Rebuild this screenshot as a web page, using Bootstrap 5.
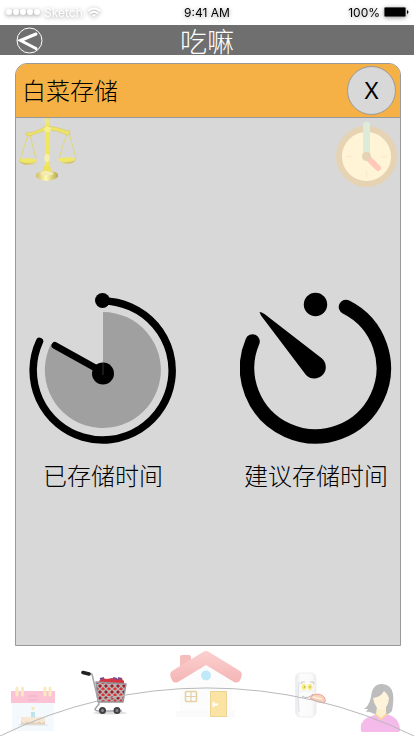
<!DOCTYPE html>
<html lang="zh-CN">
<head>
<meta charset="utf-8">
<meta name="viewport" content="width=device-width, initial-scale=1">
<title>吃嘛</title>
<link href="https://cdn.jsdelivr.net/npm/bootstrap@5.3.0/dist/css/bootstrap.min.css" rel="stylesheet">
<script src="https://cdn.jsdelivr.net/npm/bootstrap@5.3.0/dist/js/bootstrap.bundle.min.js" defer></script>
<style>
body { font-family: "Liberation Sans", "Noto Sans CJK SC", sans-serif; color: #000; background: #fff; }
svg { display: block; }
.status-bar { height: 25px; padding: 0 5px; font: 12px/24px Inter, sans-serif; }
.status-bar > div { flex: 1 1 0; }
.status-shadow { filter: drop-shadow(0 1px 2px rgba(0,0,0,.4)); }
.carrier { color: #fff; }
.title-bar { height: 30px; background: #6f6f6f; }
.app-title { padding-top: 2px; font: 300 27px/30px "Noto Sans CJK SC", sans-serif; color: #fff; }
.back-link { width: 28px; }
.side-slot { flex: 1 1 0; padding-left: 15px; }
.panel { margin: 8px 13px 0 15px; border: 1px solid #999; border-radius: 12px 12px 0 0; background: #d8d8d8; }
.panel-head { height: 54px; padding: 0 4px 0 6px; background: #f5b145; border-bottom: 1px solid #999; border-radius: 11px 11px 0 0; }
.hand-text { font: 300 24px/32px "Noto Sans CJK SC", sans-serif; }
.panel-title { padding-bottom: 2px; }
.close-btn { width: 49px; height: 49px; padding: 0 0 2px; border: 1px solid #999; background: #d8d8d8; font: 24px/40px "Noto Sans", sans-serif; color: #000; }
.tool-row { padding: 0 2px 0 3px; }
.timer-row { padding: 104px 8px 0 11px; }
.timer { width: 152px; }
.timer-label { margin-top: 15px; }
.tab-area { height: 90px; padding: 4px 12px 0 10px; }
.tab-arc { inset: 0; }
.tab-arc path { vector-effect: non-scaling-stroke; }
.faded { opacity: .3; }
</style>
</head>
<body>
<div class="d-flex flex-column min-vh-100">
  <header>
    <div class="status-bar d-flex align-items-center">
      <div class="status-shadow carrier d-flex align-items-center gap-1">
        <svg width="35" height="10" viewBox="0 0 35 10" fill="#fff" aria-hidden="true"><circle cx="4" cy="4" r="3"/><circle cx="11" cy="4" r="3"/><circle cx="18" cy="4" r="3"/><circle cx="25" cy="4" r="3"/><circle cx="32" cy="4" r="3"/></svg>
        <span>Sketch</span>
        <svg width="14" height="12" viewBox="0 0 14 12" fill="none" stroke="#fff" stroke-width="2" aria-hidden="true"><path d="M1 4Q7-1 13 4M3 6.500Q7 3 11 6.500"/><path d="M5 8Q7 6.500 9 8L7 10Z" fill="#fff" stroke="none"/></svg>
      </div>
      <div class="status-shadow text-center">9:41 AM</div>
      <div class="status-shadow d-flex justify-content-end align-items-center gap-1">
        <span>100%</span>
        <svg width="25" height="12" viewBox="0 0 25 12" aria-hidden="true"><rect x=".5" y=".5" width="21" height="9" rx="1" stroke="#555" fill="#000"/><path d="M23 3q3 2 0 4Z"/></svg>
      </div>
    </div>
    <nav class="title-bar d-flex align-items-center" aria-label="标题栏">
      <div class="side-slot"><a class="back-link d-block" href="#" aria-label="返回"><svg width="28" height="28" viewBox="0 0 28 28" fill="none" stroke="#fff"><circle cx="14.500" cy="14.500" r="12.500"/><path d="M21 8 5.500 14.500 21 22.500" stroke-width="3" stroke-linecap="round"/></svg></a></div>
      <h1 class="app-title m-0">吃嘛</h1>
      <div class="side-slot"></div>
    </nav>
  </header>

  <main class="panel flex-grow-1 d-flex flex-column">
    <div class="panel-head d-flex align-items-center justify-content-between">
      <h2 class="hand-text panel-title m-0">白菜存储</h2>
      <button type="button" class="close-btn btn rounded-circle" aria-label="关闭">X</button>
    </div>
    <div class="tool-row d-flex justify-content-between">
      <svg width="58" height="70" viewBox="19 118 58 70" role="img" aria-label="天平">
        <defs><linearGradient id="gold"><stop stop-color="#cfc06a"/><stop offset=".45" stop-color="#fffbb5"/><stop offset="1" stop-color="#b9a84d"/></linearGradient><linearGradient id="pan"><stop stop-color="#cfbd68"/><stop offset=".6" stop-color="#f5ed9f"/><stop offset="1" stop-color="#c6b568"/></linearGradient></defs>
        <path d="m28 135-8 25M30 135l6 24M67 133l-8 25M69 133l7 25" fill="none" stroke="#e2d776" stroke-width="1"/>
        <path d="M26 133q9 0 20-7 13 1 21 5l2-1 1 4-3 1q-9-5-20-5-9 3-18 6l-3-1Z" fill="#ede36b" stroke="#d3c54e" stroke-width=".5"/>
        <path d="M45.500 118h3.500v44l1 6h-6l1.500-6Z" fill="#f0e75c"/>
        <circle cx="47" cy="121" r="2.300" fill="#eee789"/><path d="M44 128q3-3 7 0l-1 4h-5Z" fill="#f6ef91"/>
        <ellipse cx="47" cy="158" rx="2.700" ry="4" fill="#f5efad"/>
        <path d="M19 160h18q-1 5-9 5t-9-5ZM58 159h18q-2 5-9 5t-9-5Z" fill="url(#pan)"/>
        <ellipse cx="28" cy="160.500" rx="8.500" ry="2.300" fill="#efe768"/><ellipse cx="67" cy="159.500" rx="8.500" ry="2.300" fill="#efe768"/>
        <path d="M44 166h6l2 7h-10Z" fill="#eee25a"/><path d="M36 175q0-4 11-4t11 4v2q-4 3-11 4-8-1-11-4Z" fill="url(#gold)"/><ellipse cx="47" cy="173.500" rx="6.500" ry="2" fill="#f3ebb5"/>
      </svg>
      <svg width="62" height="70" viewBox="336 118 62 70" role="img" aria-label="时钟">
        <circle cx="366.500" cy="156.500" r="27.500" fill="#fff4d6" stroke="#e6d3b3" stroke-width="6"/>
        <path d="M346 156.500h6M381 156.500h6M366.500 171v6" stroke="#fbe9cb" stroke-width="1.500"/>
        <path d="m367 157 11 11" stroke="#ffc8b9" stroke-width="6" stroke-linecap="round"/><path d="M366.500 156v-31" stroke="#dcecd9" stroke-width="7" stroke-linecap="round"/><circle cx="366.500" cy="156.500" r="4.500" fill="#e6d3b3"/>
      </svg>
    </div>
    <div class="timer-row d-flex justify-content-between text-center">
      <figure class="timer d-flex flex-column align-items-center m-0">
        <svg width="152" height="152" viewBox="27 292 152 152" aria-hidden="true">
          <path d="M103 370V312A58 58 0 1 1 51 344Z" fill="#a0a0a0"/>
          <path d="M103 301A69.500 69.500 0 1 1 39.500 341.500" fill="none" stroke="#000" stroke-width="7.500" stroke-linecap="round"/>
          <circle cx="102.500" cy="300.500" r="7.500"/><path d="m55 345.500 45 25" stroke="#000" stroke-width="7" stroke-linecap="round"/><circle cx="103" cy="373.500" r="11"/><path d="M103 363v12" stroke="#333" stroke-width="1"/>
        </svg>
        <figcaption class="hand-text timer-label text-nowrap">已存储时间</figcaption>
      </figure>
      <figure class="timer d-flex flex-column align-items-center m-0">
        <svg width="152" height="152" viewBox="240 292 152 152" aria-hidden="true">
          <path d="M346 307A68.300 68.300 0 1 1 252.500 341.500" fill="none" stroke="#000" stroke-width="14.500" stroke-linecap="round"/>
          <circle cx="315.500" cy="304.500" r="11.700"/><path d="M259.500 312q2 0 5 2L322 358.500A11.500 11.500 0 1 1 306 375L261 315.500Z"/>
        </svg>
        <figcaption class="hand-text timer-label text-nowrap">建议存储时间</figcaption>
      </figure>
    </div>
  </main>

  <nav class="tab-area position-relative d-flex justify-content-between align-items-start" aria-label="主导航">
    <a href="#" aria-label="日历"><svg width="46" height="86" viewBox="10 650 46 86">
      <g class="faded"><path d="M12 703h42v28H12Z" fill="#d8edfa"/><path d="M11 691h44v12H11Z" fill="#f63b72"/><path d="M28 696h10M28 700h10" stroke="#b60c55"/><path d="M17 688v7M22.500 688v7M45 688v7M50 688v7" stroke="#f4ba45" stroke-width="3" stroke-linecap="round"/><path d="M33 712v6" stroke="#23a7cc" stroke-width="4"/><circle cx="33" cy="708.500" r="1.700" fill="#edae17"/><path d="M21 717h24v8H21Z" fill="#aa681e"/><path d="M21 717h24v4q-3 4-6 0-3 4-6 0-3 4-6 0-3 4-6 0Z" fill="#e2b572"/><path d="M18 725h30" stroke="#9ab" /></g>
    </svg></a>
    <a href="#" aria-label="购物车" aria-current="page"><svg width="48" height="86" viewBox="80 650 48 86">
      <defs><pattern id="mesh" width="6" height="6" patternUnits="userSpaceOnUse"><path d="M0 0h6v6H0Z" fill="#b8b2b5"/><path d="m3 0 2 2-2 2-2-2Z" fill="#9a2029"/><path d="m0 3 2 2-2 2-2-2ZM6 3l2 2-2 2-2-2Z" fill="#e0322e"/></pattern></defs>
      <ellipse cx="109" cy="713" rx="17" ry="1.500" fill="#ddd"/><path d="m98 681 3-3 5 1 5-1 4 1 5-1 3 3v4H97Z" fill="#d33640"/><path d="m99 679 4-1m9 0 4 1m1-1 4 1" stroke="#7c4c91" stroke-width="2"/>
      <path d="m95 682 30 2-3 18H97Z" fill="url(#mesh)" stroke="#96969b" stroke-width="1.500" stroke-linejoin="round"/>
      <path d="m87 673 4 1 7 30-4 5q0 2 4 2h23" fill="none" stroke="#a4a4aa" stroke-width="1.500"/><path d="m82 672.500 6 1.500" stroke="#222" stroke-width="3.500" stroke-linecap="round"/>
      <g fill="#888" stroke="#404046" stroke-width="2"><circle cx="101.500" cy="710.500" r="2.500"/><circle cx="116" cy="710.500" r="2.500"/></g>
    </svg></a>
    <a class="ms-3" href="#" aria-label="首页"><svg width="76" height="86" viewBox="170 650 76 86">
      <defs><linearGradient id="roof" x2="0" y2="1"><stop stop-color="#fbd0cf"/><stop offset="1" stop-color="#f5b5b6"/></linearGradient></defs>
      <path d="m181 677 26-15 26 15v34h-52Z" fill="#fcfcfc"/><path d="M177 711h59v6h-59Z" fill="#fafafa"/><path d="M181 669v-12q0-2 2-2h7q2 0 2 2v7Z" fill="#f6bdbd"/>
      <path d="m173 671 31-19q3-2 6 0l31 19q3 2 1 7-2 6-7 4l-28-17-28 17q-5 2-7-4-2-5 1-7Z" fill="url(#roof)"/><circle cx="207" cy="675.500" r="5" fill="#bfe9f8"/>
      <rect x="186.500" y="691.500" width="11" height="10" rx="1" fill="#fbfbff" stroke="#e3d2a0" stroke-width="1.600"/><path d="M192 691v11M186 696.500h12" stroke="#e3d2a0" stroke-width="1.200"/>
      <path d="M211.500 716.500v-25h16v25Z" fill="#fae3a3" stroke="#ead593"/><path d="M214.500 702v5M215 704.500h4" stroke="#fff" stroke-width="2"/>
    </svg></a>
    <a class="ms-4" href="#" aria-label="冰箱"><svg width="34" height="86" viewBox="294 650 34 86">
      <defs><linearGradient id="fridge"><stop stop-color="#e9e9e9"/><stop offset=".25" stop-color="#fcfcfc"/><stop offset=".8" stop-color="#fafafa"/><stop offset="1" stop-color="#eaeaea"/></linearGradient></defs>
      <rect x="295.500" y="673" width="20.500" height="44" rx="5" fill="url(#fridge)" stroke="#efefef"/><path d="M299 682q-2 14 0 30" fill="none" stroke="#dce0e8"/><path d="M300 691h14" stroke="#eee"/><path d="m301 684 1-2 3 0m5 0 3 0 1 2" fill="none" stroke="#c9c9c9" stroke-width="1.200"/>
      <ellipse cx="304" cy="687" rx="2.400" ry="3" fill="#f9ec77"/><ellipse cx="310" cy="687" rx="2.400" ry="3" fill="#f9ec77"/><circle cx="304.500" cy="687" r=".8" fill="#a99b60"/><circle cx="310" cy="687" r=".8" fill="#a99b60"/>
      <path d="M302 696q5 4 11-2" fill="none" stroke="#bbb"/><path d="M310 698q2-4 8-4 6 1 7 5 1 3-1 4-6 0-14-5Z" fill="#f8d1b9" stroke="#eda4a0"/><path d="m313 697 9 2" stroke="#fff0dc" stroke-width="1.500"/>
    </svg></a>
    <a class="ms-2" href="#" aria-label="我的"><svg width="42" height="86" viewBox="360 650 42 86">
      <path d="M371 697q1-13 11-13 9 0 11 10 1 6-1 17-7 8-20 2-4-2-6-1l2-3-4 0q5-3 7-12Z" fill="#bdbdbd"/>
      <path d="M361 731q-2-12 11-15l5-2h9q14 3 14 17-1 1-2 1h-35q-2 0-2-1Z" fill="#f4baea"/><path d="M377 707h9v7l-5 5-5-5Z" fill="#fbefce"/><path d="m375 714 6 5 6-5" fill="none" stroke="#f7d793" stroke-width="1.500"/><path d="M373 698q8-1 11-7 4 3 5 7-1 10-7 12-7-1-9-12Z" fill="#fff4db"/>
    </svg></a>
    <svg class="tab-arc position-absolute w-100 h-100 pe-none" viewBox="0 0 414 90" preserveAspectRatio="none" aria-hidden="true"><path d="M0 90A470 470 0 0 1 414 90" fill="none" stroke="#b9b9b9"/></svg>
  </nav>
</div>
</body>
</html>
